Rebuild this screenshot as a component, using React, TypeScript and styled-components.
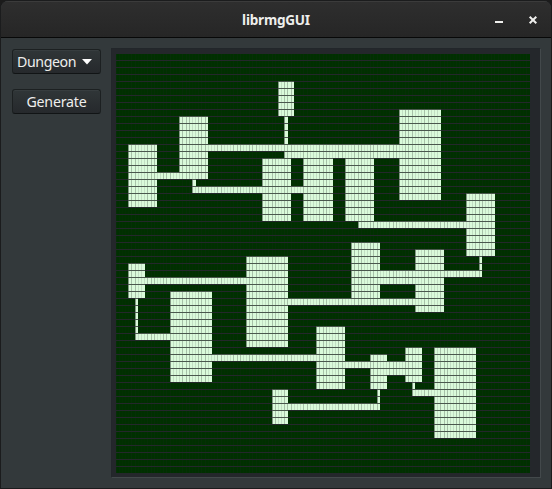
import React from "react";
import styled, { createGlobalStyle } from "styled-components";

const COLS = 130;
const ROWS = 60;
const CELL_W = 414 / COLS;
const CELL_H = 7;

/* [column, row, width, height] in map cells */
type Area = [number, number, number, number];

const rooms: Area[] = [
  [51, 4, 5, 5], [20, 9, 9, 9], [4, 13, 9, 9], [89, 8, 13, 13],
  [46, 15, 9, 9], [59, 15, 9, 9], [72, 15, 9, 9], [110, 20, 9, 9],
  [74, 27, 9, 8], [94, 28, 9, 9], [41, 29, 13, 13], [4, 30, 5, 5],
  [17, 34, 13, 13], [63, 39, 9, 9], [80, 43, 5, 5], [91, 42, 5, 5],
  [100, 42, 13, 13], [49, 48, 5, 5],
];

const corridors: Area[] = [
  [53, 9, 1, 4], [29, 13, 60, 1], [53, 14, 36, 1], [13, 17, 7, 1],
  [24, 18, 1, 1], [24, 19, 35, 1], [76, 24, 34, 1], [114, 29, 1, 2],
  [83, 31, 32, 1], [83, 32, 11, 1], [54, 35, 40, 1], [9, 32, 32, 1],
  [6, 35, 1, 5], [6, 40, 11, 1], [30, 43, 33, 1], [72, 44, 19, 1],
  [85, 45, 6, 1], [93, 47, 1, 1], [93, 48, 7, 1], [82, 48, 1, 2],
  [54, 50, 29, 1],
];

const floor = new Set<number>();
for (const [c, r, w, h] of [...rooms, ...corridors]) {
  for (let y = r; y < r + h; y++) for (let x = c; x < c + w; x++) floor.add(y * COLS + x);
}

const spans: { row: number; from: number; to: number }[] = [];
for (let row = 0; row < ROWS; row++) {
  let col = 0;
  while (col < COLS) {
    if (!floor.has(row * COLS + col)) { col++; continue; }
    const from = col;
    while (col < COLS && floor.has(row * COLS + col)) col++;
    spans.push({ row, from, to: col });
  }
}

const GlobalStyle = createGlobalStyle`
  html, body { margin: 0; background: #1b1b1b; overflow: hidden; }
`;

const Window = styled.div`
  box-sizing: border-box;
  width: 552px;
  height: 489px;
  display: flex;
  flex-direction: column;
  border: 1px solid #1b1c1d;
  border-radius: 8px 8px 0 0;
  background: #33393b;
  font-family: "Noto Sans", sans-serif;
  overflow: hidden;
`;

const TitleBar = styled.header`
  box-sizing: border-box;
  height: 37px;
  flex: none;
  display: grid;
  grid-template-columns: 1fr auto 1fr;
  align-items: center;
  background: linear-gradient(#2e2e2e, #262626);
  border-top: 1px solid #3b3b3b;
  border-bottom: 1px solid #070808;
`;

const Title = styled.h1`
  grid-column: 2;
  margin: 0;
  font: 700 13.6px/20px "Noto Sans", sans-serif;
  letter-spacing: -0.25px;
  color: #eeeeec;
`;

const WindowControls = styled.div`
  display: flex;
  justify-content: flex-end;
  gap: 24px;
  padding-right: 13px;
`;

const Control = styled.button`
  width: 10px;
  height: 10px;
  padding: 0;
  border: 0;
  background: none;
  svg { display: block; }
`;

const Body = styled.main`
  display: flex;
  flex: 1;
  gap: 10px;
  padding: 10px 10px 11px 11px;
`;

const Sidebar = styled.aside`
  display: flex;
  flex-direction: column;
  gap: 15px;
  width: 89px;
  flex: none;
  padding-top: 1px;
`;

const Button = styled.button<{ $menu?: boolean }>`
  box-sizing: border-box;
  height: 25px;
  flex: none;
  display: flex;
  align-items: center;
  justify-content: ${(p) => (p.$menu ? "space-between" : "center")};
  padding: ${(p) => (p.$menu ? "0 8px 0 4px" : "0")};
  border: 1px solid #1c2021;
  border-bottom-color: #111415;
  border-radius: 3px;
  background: linear-gradient(#303638, #26292c);
  box-shadow: inset 0 1px #373d3f;
  color: #eeeeec;
  font: 400 14.2px/20px "Noto Sans", sans-serif;
  letter-spacing: ${(p) => (p.$menu ? "-0.4px" : "-0.2px")};
`;

const MapFrame = styled.section`
  box-sizing: border-box;
  width: 430px;
  height: 430px;
  padding: 4px 0 0 4px;
  border: 1px solid #43494b;
  border-top-color: #22262a;
  border-left-color: #22262a;
  background: #24272b;
  svg { display: block; }
`;

/* Seams between cells are thinner than a pixel, so each one is a faint tint of a whole pixel column. */
function seam(col: number) {
  const x = col * CELL_W;
  const phase = x - Math.floor(x);
  return { x: Math.floor(x), strength: phase < 0.25 || phase > 0.75 ? 0.34 : 0.16 };
}

function DungeonMap() {
  return (
    <svg width="414" height="420" viewBox="0 0 414 420" shapeRendering="crispEdges">
      <rect width="414" height="420" fill="#003000" />
      {Array.from({ length: COLS }, (_, c) => {
        const { x, strength } = seam(c);
        return <rect key={c} x={x} y="0" width="1" height="420" fill="#24272b" opacity={strength * 0.5} />;
      })}
      {Array.from({ length: ROWS }, (_, r) => (
        <rect key={r} x="0" y={r * CELL_H} width="414" height="1" fill="#24272b" />
      ))}
      {spans.map(({ row, from, to }) => {
        const x = Math.floor(from * CELL_W);
        const right = Math.round(to * CELL_W);
        const y = row * CELL_H;
        return (
          <g key={`${row}-${from}`}>
            <rect x={x} y={y} width={right - x} height="1" fill="#4a574d" />
            <rect x={x} y={y + 1} width={right - x} height="6" fill="#dafada" />
            {Array.from({ length: to - from }, (_, i) => {
              const line = seam(from + i);
              return (
                <rect
                  key={i}
                  x={line.x}
                  y={y + 1}
                  width="1"
                  height="6"
                  fill="#465249"
                  opacity={i === 0 ? 0.6 : line.strength}
                />
              );
            })}
          </g>
        );
      })}
    </svg>
  );
}

export default function App() {
  return (
    <>
      <GlobalStyle />
      <Window>
        <TitleBar>
          <Title>librmgGUI</Title>
          <WindowControls>
            <Control aria-label="Minimize">
              <svg width="10" height="10"><path d="M1 6h8v2H1z" fill="#eeeeec" /></svg>
            </Control>
            <Control aria-label="Close">
              <svg width="10" height="10"><path d="M1.7 1.7l6.6 6.6M8.3 1.7L1.7 8.3" stroke="#eeeeec" strokeWidth="2" /></svg>
            </Control>
          </WindowControls>
        </TitleBar>
        <Body>
          <Sidebar>
            <Button $menu>
              Dungeon
              <svg width="10" height="6"><path d="M0 0h10L5 5.5z" fill="#fff" /></svg>
            </Button>
            <Button>Generate</Button>
          </Sidebar>
          <MapFrame>
            <DungeonMap />
          </MapFrame>
        </Body>
      </Window>
    </>
  );
}
